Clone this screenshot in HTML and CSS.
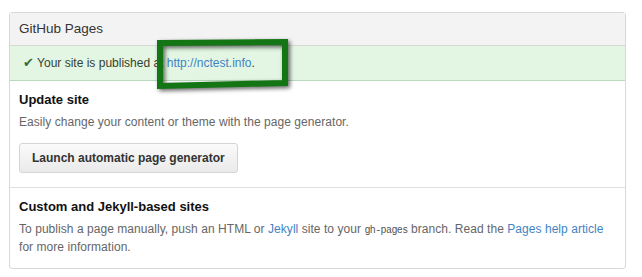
FILE: index.html
```html
<!DOCTYPE html>
<html lang="en">
<head>
    <meta charset="UTF-8">
    <title>GitHub Pages</title>
    <link rel="stylesheet" href="styles.css">
</head>
<body>
    <div class="boxed-group">
        <h3 class="group-title">GitHub Pages</h3>
        <div class="flash-notice">
            <span class="check">&#10004;</span>
            Your site is published at <a href="#">http://nctest.info</a>.
        </div>
        <div class="group-section">
            <h4>Update site</h4>
            <p class="note">Easily change your content or theme with the page generator.</p>
            <button class="minibutton">Launch automatic page generator</button>
        </div>
        <div class="group-section">
            <h4>Custom and Jekyll-based sites</h4>
            <p class="note">To publish a page manually, push an HTML or <a href="#">Jekyll</a> site to your <code>gh-pages</code> branch. Read the <a href="#">Pages help article</a> for more information.</p>
        </div>
    </div>

    <!-- hand-drawn highlight round the url -->
    <svg class="annotation" width="642" height="277" viewBox="0 0 642 277">
        <path d="M160 43 L285 42 L285 83 L160 86 Z" fill="none" stroke="#137513" stroke-width="6" stroke-linejoin="miter"/>
    </svg>
</body>
</html>
```

FILE: styles.css
```css
body {
    margin: 0;
    padding: 12px 16px 0 9px;
    font-family: 'Liberation Sans', Arial, sans-serif;
    font-size: 12px;
    color: #333;
    background: #fff;
}

a {
    color: #4183c4;
    text-decoration: none;
}

.boxed-group {
    width: 615px;
    border: 1px solid #d8d8d8;
    border-radius: 3px;
}

.group-title {
    margin: 0;
    height: 32px;
    line-height: 32px;
    padding: 0 9px;
    font-size: 13.5px;
    font-weight: normal;
    color: #333;
    background: #f3f3f3;
    border-bottom: 1px solid #d8d8d8;
}

.flash-notice {
    height: 34px;
    line-height: 34px;
    padding: 0 13px;
    background: #e2f6e3;
    border-bottom: 1px solid #b8d9bb;
    color: #353f32;
}

.check {
    color: #3e6a36;
    font-size: 13px;
}

.group-section {
    padding: 10px 14px 14px 9px;
}

.group-section + .group-section {
    border-top: 1px solid #e0e0e0;
    padding-bottom: 12px;
}

.group-section h4 {
    margin: 0 0 5px;
    height: 18px;
    line-height: 18px;
    font-size: 13px;
    color: #111;
}

.note {
    margin: 0;
    color: #666;
    line-height: 17px;
    letter-spacing: 0.05px;
}

.minibutton {
    display: block;
    margin-top: 12px;
    height: 30px;
    padding: 0 12px;
    font-family: inherit;
    font-size: 12px;
    font-weight: bold;
    color: #333;
    background: linear-gradient(#fafafa, #eaeaea);
    border: 1px solid #d4d4d4;
    border-radius: 3px;
}

code {
    font-family: 'Liberation Mono', monospace;
    font-size: 10px;
    letter-spacing: -0.6px;
    color: #555;
}

.annotation {
    position: absolute;
    left: 0;
    top: 0;
    pointer-events: none;
    filter: drop-shadow(2px 2px 2px rgba(0, 0, 0, 0.6));
}
```
